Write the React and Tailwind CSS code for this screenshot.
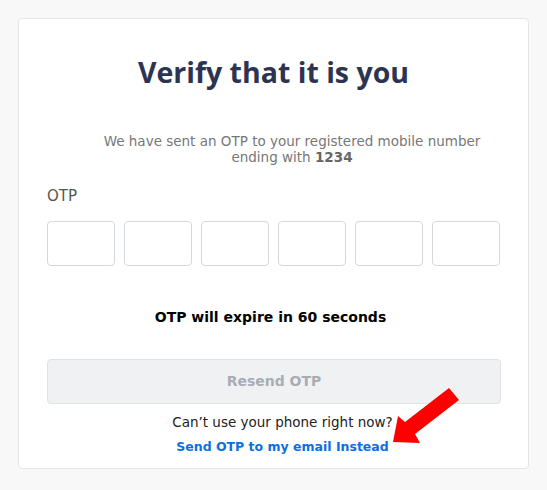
import React from 'react';

const OtpBox = () => (
  <input
    type="text"
    maxLength={1}
    className="h-[45px] w-[68px] rounded-[4px] border border-[#d4d8dd] bg-white text-center outline-none"
  />
);

const App = () => {
  return (
    <div className="min-h-screen bg-[#f8f8f8] pt-[18px] pl-[18px]" style={{ fontFamily: '"DejaVu Sans", Verdana, sans-serif' }}>
      <div className="relative w-[511px] h-[451px] rounded-[4px] border border-[#e3e5e8] bg-white px-[28px]">
        <h1 className="pt-[32px] text-center text-[28.5px] font-bold text-[#2d3452]" style={{ fontFamily: '"Open Sans", sans-serif' }}>
          Verify that it is you
        </h1>
        <p className="mt-[39px] pl-[37px] text-center text-[13.5px] leading-[16px] text-[#777]">
          We have sent an OTP to your registered mobile number
          <br />
          ending with <span className="font-bold text-[#666]">1234</span>
        </p>
        <div className="mt-[20px] text-[15px] text-[#555]">OTP</div>
        <div className="mt-[14px] flex gap-[9px]">
          <OtpBox />
          <OtpBox />
          <OtpBox />
          <OtpBox />
          <OtpBox />
          <OtpBox />
        </div>
        <p className="mt-[41px] pr-[6px] text-center text-[14px] font-bold text-black">OTP will expire in 60 seconds</p>
        <button
          disabled
          className="mt-[31px] h-[45px] w-[454px] rounded-[4px] border border-[#e0e2e5] bg-[#f0f1f3] text-[14px] font-bold text-[#a9adb3]"
        >
          Resend OTP
        </button>
        <p className="mt-[8px] pl-[18px] text-center text-[13.5px] text-[#222]">Can&rsquo;t use your phone right now?</p>
        <a href="#" className="mt-[5px] block pl-[18px] text-center text-[12.5px] font-bold text-[#0b6fe3]">
          Send OTP to my email Instead
        </a>
        {/* red pointer arrow */}
        <svg className="absolute left-[351px] top-[361px]" width="100" height="70" viewBox="0 0 100 70">
          <polygon points="79,8 89,20 45,54 50,63 23,62 28,36 35,42" fill="#f00" />
        </svg>
      </div>
    </div>
  );
};

export default App;
